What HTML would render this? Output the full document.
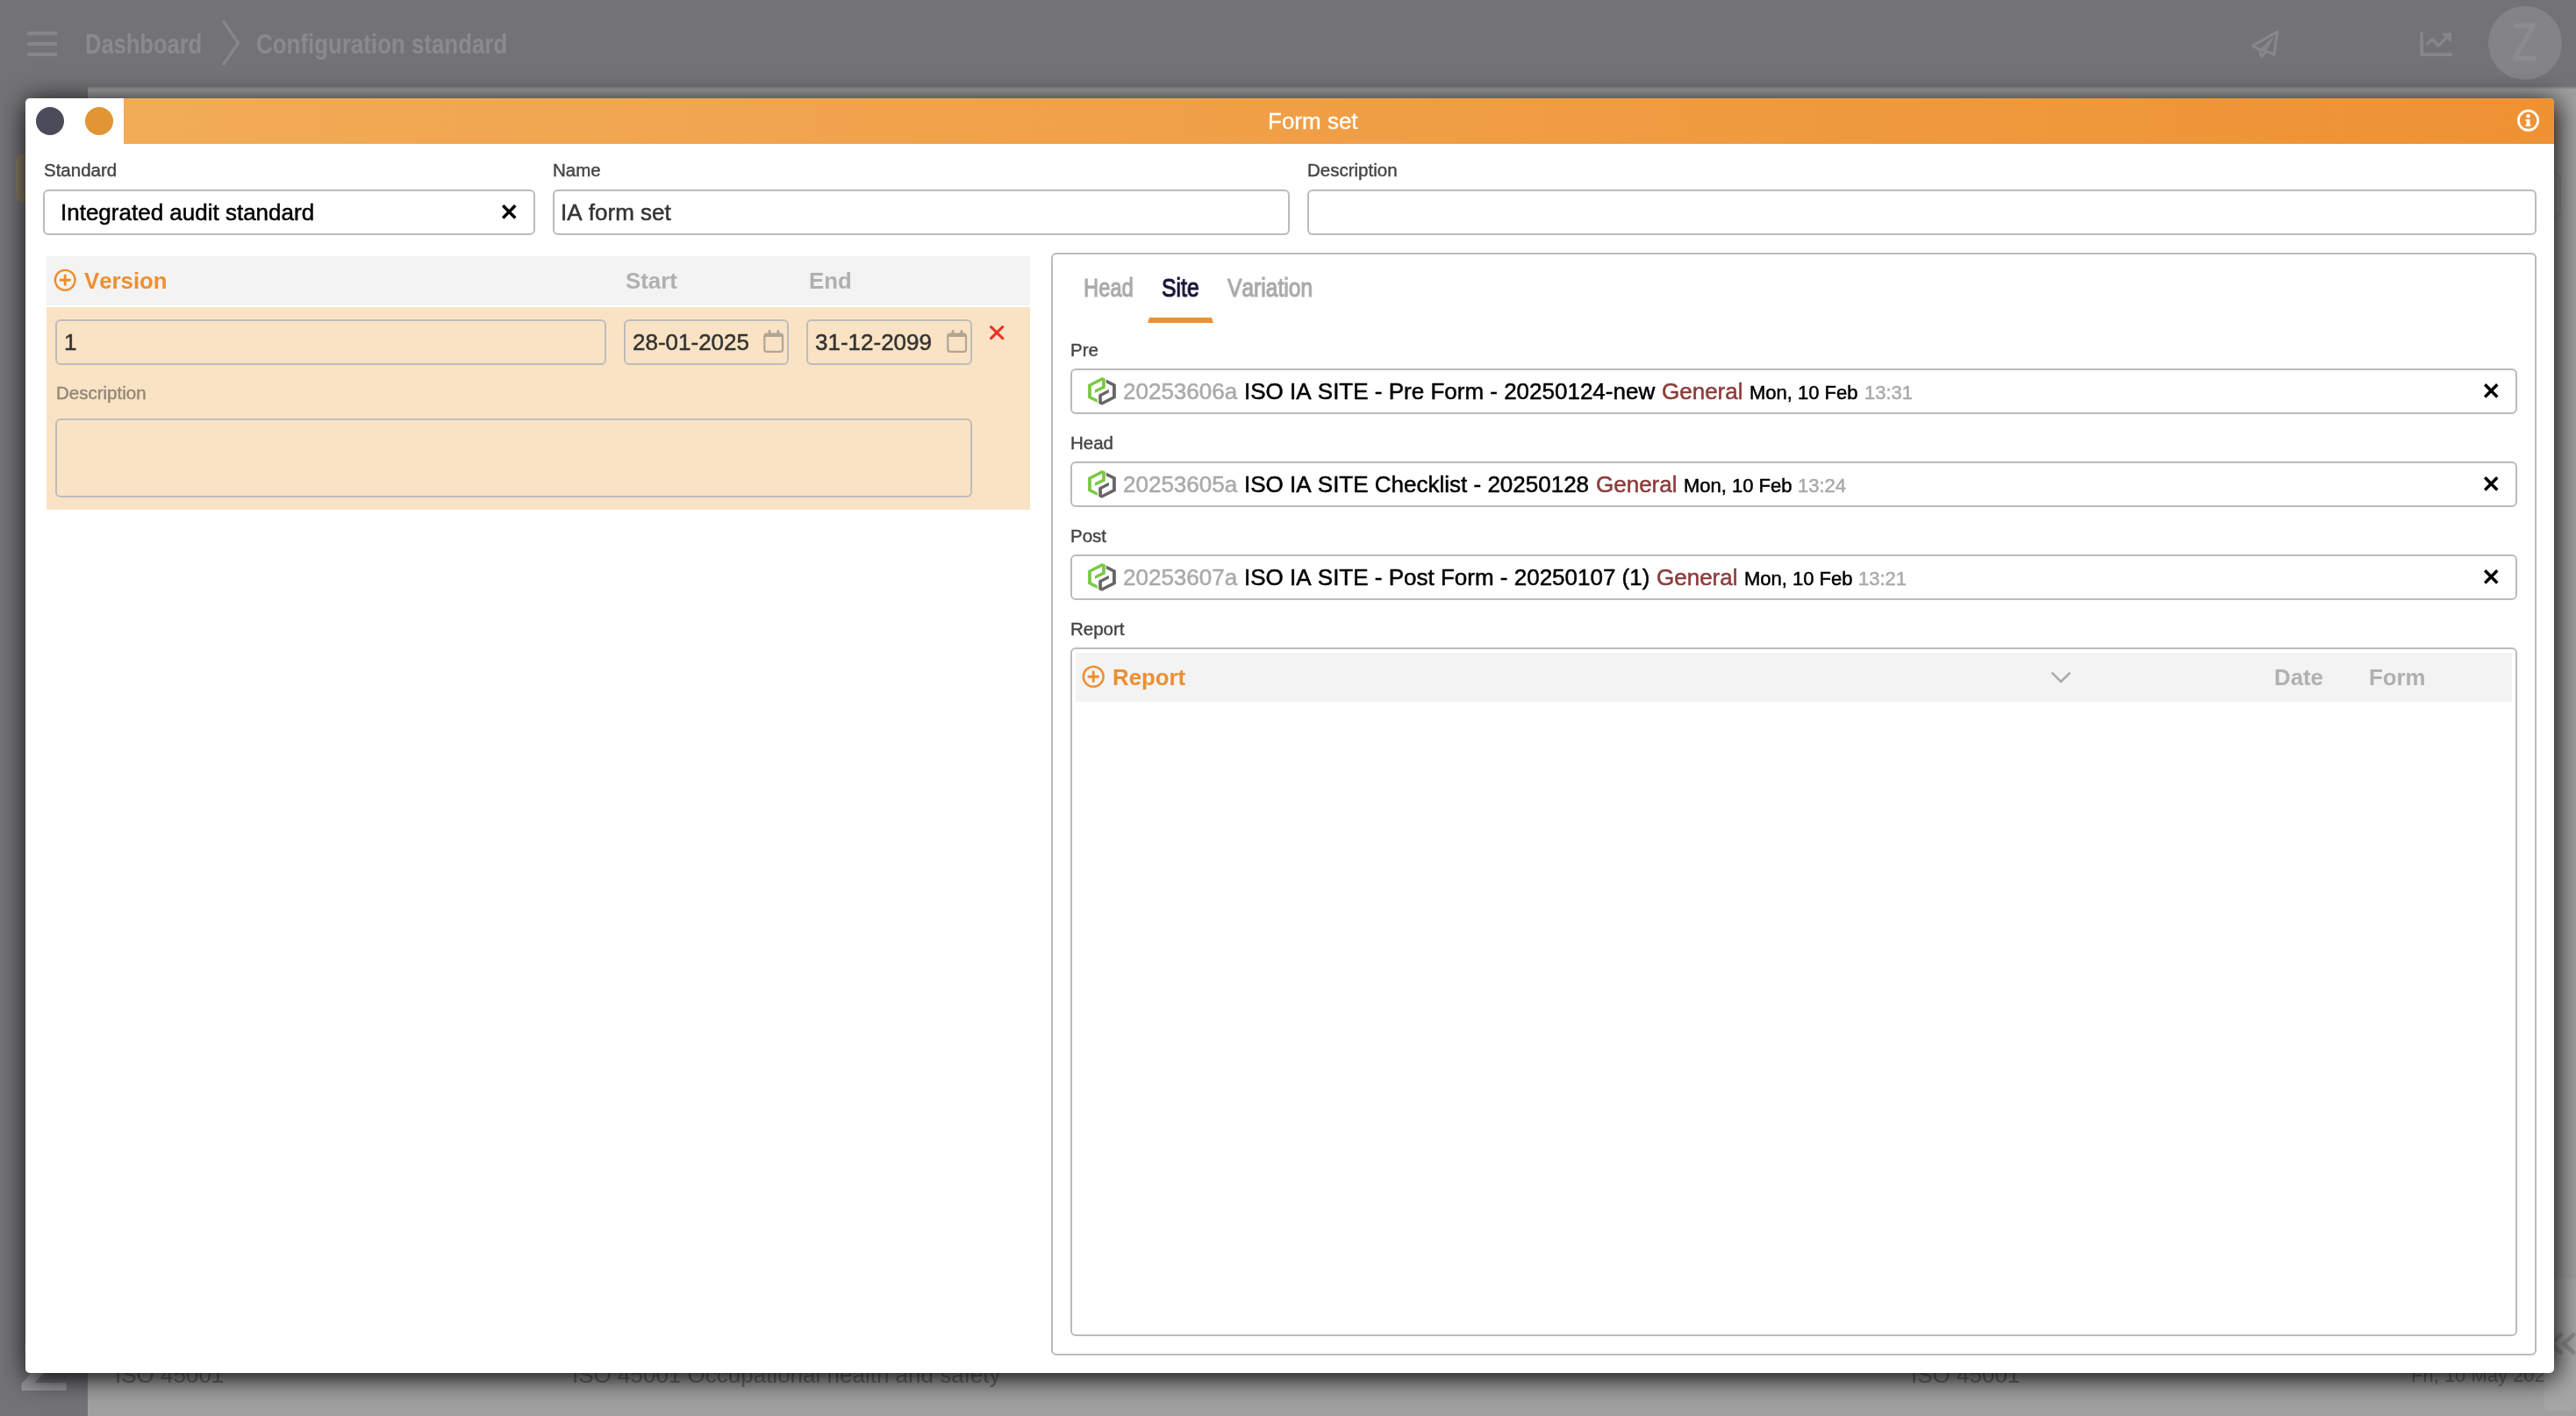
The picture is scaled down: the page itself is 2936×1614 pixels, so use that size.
<!DOCTYPE html>
<html>
<head>
<meta charset="utf-8">
<title>Form set</title>
<style>
*{box-sizing:border-box;margin:0;padding:0}
html,body{width:2936px;height:1614px;background:#a0a0a0}
#root{position:relative;width:2936px;height:1614px;overflow:hidden;background:#a0a0a0;font-family:"Liberation Sans",sans-serif;font-kerning:none}
.abs{position:absolute}
.t,.row{position:absolute;white-space:nowrap;line-height:1;will-change:transform}
.cond{transform-origin:0 50%}
svg{position:absolute;overflow:visible}
/* background app */
#topbar{left:0;top:0;width:2936px;height:99px;background:#737277}
#sidebar{left:0;top:99px;width:100px;height:1515px;background:#737277}
#content{left:100px;top:99px;width:2836px;height:1515px;background:#a0a0a0}
.bgtxt{color:#8b8a8f;font-weight:bold}
.bgrow{font-size:26px;color:#6a6a6a}
/* modal */
#modal{left:29px;top:112px;width:2882px;height:1453px;background:#fff;border-radius:5px;
  box-shadow:2px 4.4px 30px 0 rgba(0,0,0,1)}
#mhead{left:141px;top:112px;width:2770px;height:52px;background:linear-gradient(90deg,#f2ab57 0%,#ee9234 100%);border-top-right-radius:5px}
.dot{width:32px;height:32px;border-radius:50%}
.box{position:absolute;border:2px solid #bbb;border-radius:6px;background:transparent}
.row{font-size:26px;color:#000;-webkit-text-stroke:.5px}
.lbl{font-size:20.5px;color:#444;-webkit-text-stroke:.4px}
.inp{font-size:26px;color:#333;-webkit-text-stroke:.5px}
.th{font-size:25.8px;font-weight:bold;color:#b0b0b0}
.or{color:#ed8f32}
.g{color:#aaa}
.red{color:#8c3a3a}
.sm{font-size:22px}
</style>
</head>
<body>
<div id="root">
<!-- ===== background application (dimmed) ===== -->
<div id="topbar" class="abs"></div>
<div id="content" class="abs"></div>
<div id="sidebar" class="abs"></div>
<div class="abs" style="left:100px;top:99px;width:2836px;height:2.4px;background:rgba(0,0,0,.14)"></div>
<!-- hamburger -->
<div class="abs" style="left:31px;top:36px;width:33.5px;height:4px;background:#87868b"></div>
<div class="abs" style="left:31px;top:48px;width:33.5px;height:4px;background:#87868b"></div>
<div class="abs" style="left:31px;top:60px;width:33.5px;height:4px;background:#87868b"></div>
<div class="t cond bgtxt" id="bc1" style="left:97px;top:34.5px;font-size:31.5px;transform:scaleX(.81)">Dashboard</div>
<svg style="left:252px;top:22px" width="24" height="54" viewBox="0 0 24 54"><path d="M3 3 L19.5 27 L3 51" fill="none" stroke="#87868b" stroke-width="3.4" stroke-linecap="round" stroke-linejoin="round"/></svg>
<div class="t cond bgtxt" id="bc2" style="left:291.5px;top:34.5px;font-size:31.5px;transform:scaleX(.822)">Configuration standard</div>
<!-- paper plane -->
<svg id="plane" style="left:2565px;top:33px" width="35" height="34" viewBox="0 0 35 34"><path d="M2.7 19.1 L30.6 3.1 L27 29.2 L17.4 25.3 L13.8 30.4 Q12.4 32.2 11.7 29.8 L11.1 24 Z" fill="none" stroke="#87868b" stroke-width="3.2" stroke-linejoin="round" stroke-linecap="round"/><path d="M25.2 10.4 L11.3 24 L17.2 25.2 Z" fill="#87868b" stroke="#87868b" stroke-width="1.6" stroke-linejoin="round"/></svg>
<!-- chart -->
<svg id="chart" style="left:2758px;top:35px" width="38" height="30" viewBox="0 0 38 30"><path d="M2.1 2.6 V27.2 H35.6" fill="none" stroke="#87868b" stroke-width="3.8" stroke-linecap="round" stroke-linejoin="round"/><path d="M8.6 14.9 L14.4 9.5 L21.1 17.1 L30.5 7.6" fill="none" stroke="#87868b" stroke-width="3.3" stroke-linejoin="round" stroke-linecap="round"/><path d="M26 3.9 L35.3 3.3 L35.3 12.3 Z" fill="#87868b" stroke="#87868b" stroke-width="1.4" stroke-linejoin="round"/></svg>
<!-- avatar -->
<div class="abs" style="left:2836px;top:7px;width:84px;height:84px;border-radius:50%;background:#848387"></div>
<div class="t cond" id="avz" style="left:2863.2px;top:17.5px;font-size:61px;color:#8d8c90;-webkit-text-stroke:1.2px;transform:scaleX(.76)">Z</div>
<div class="abs" style="left:2600px;top:197px;width:319px;height:51px;border:2px solid rgba(0,0,0,.07);border-radius:7px"></div>
<!-- sidebar bits -->
<div class="abs" style="left:18px;top:175px;width:60px;height:56px;border-radius:8px;background:#867a65"></div>
<div class="t cond" id="sbz" style="left:22px;top:1519px;font-size:78px;font-weight:bold;color:#98989b;transform:scaleX(1.18)">Z</div>
<!-- content bits -->
<div class="t bgrow" style="left:131px;top:1554px">ISO 45001</div>
<div class="t bgrow" style="left:652px;top:1554px">ISO 45001 Occupational health and safety</div>
<div class="t bgrow" style="left:2178px;top:1554px">ISO 45001</div>
<div class="t bgrow" style="left:2748.4px;top:1556.8px;font-size:22px">Fri, 10 May 2024</div>
<div class="abs" style="left:2900px;top:1457px;width:36px;height:151px;border-radius:5px;background:#a6a6a6"></div>
<svg id="dbl" style="left:2900px;top:1515px" width="36" height="34" viewBox="0 0 36 34"><path d="M18.8 6.2 L7.7 16.6 L18.8 26.8 M33.2 6.2 L22.1 16.6 L33.2 26.8" fill="none" stroke="#8b8b8b" stroke-width="4.7" stroke-linecap="round" stroke-linejoin="round"/></svg>
<!-- ===== modal ===== -->
<div id="modal" class="abs"></div>
<div id="mhead" class="abs"></div>
<div class="abs dot" style="left:41px;top:122px;background:#4a4c59"></div>
<div class="abs dot" style="left:97px;top:122px;background:#e29534"></div>
<div class="t" id="title" style="left:1445px;top:125px;font-size:26px;color:#fff;-webkit-text-stroke:.3px">Form set</div>
<!-- info icon -->
<svg id="info" style="left:2868px;top:124px" width="27" height="27" viewBox="0 0 27 27"><circle cx="13.55" cy="13.3" r="11.1" fill="none" stroke="#fff" stroke-width="2.8"/><circle cx="13.5" cy="8.3" r="2.25" fill="#fff"/><path d="M10.6 11.9 H15.5 V17.7 H16.2 V19.9 H10.7 V17.7 H11.6 V14.1 H10.6 Z" fill="#fff"/></svg>

<!-- top fields -->
<div class="t lbl" id="l1" style="left:49.7px;top:184px">Standard</div>
<div class="t lbl" id="l2" style="left:630px;top:184px">Name</div>
<div class="t lbl" id="l3" style="left:1490px;top:184px">Description</div>
<div class="box" style="left:49px;top:216px;width:561px;height:52px"></div>
<div class="box" style="left:630px;top:216px;width:840px;height:52px"></div>
<div class="box" style="left:1490px;top:216px;width:1401px;height:52px"></div>
<div class="t inp" id="i1" style="left:69px;top:229px;color:#000">Integrated audit standard</div>
<svg class="x" style="left:571.85px;top:232.85px" width="16.5" height="16.7" viewBox="0 0 16.5 16.7"><path d="M1.20 1.20 L15.30 15.50 M15.30 1.20 L1.20 15.50" stroke="#000" stroke-width="3.4" stroke-linecap="butt" fill="none"/></svg>
<div class="t inp" id="i2" style="left:639.2px;top:229px">IA form set</div>

<!-- version table -->
<div class="abs" style="left:53px;top:292px;width:1121px;height:55.5px;background:#f3f3f3"></div>
<div class="abs" style="left:53px;top:350px;width:1121px;height:230.5px;background:#fae3c4"></div>
<svg class="plus" style="left:61px;top:306px" width="27" height="27" viewBox="0 0 27 27"><circle cx="13.2" cy="13.25" r="11.4" fill="none" stroke="#ee8d2f" stroke-width="2.4"/><path d="M7.9 13.25 H18.5 M13.2 7.95 V18.55" stroke="#ee8d2f" stroke-width="2.9" stroke-linecap="round" fill="none"/></svg>
<div class="t th or" id="h1" style="left:95.5px;top:307.8px">Version</div>
<div class="t th" id="h2" style="left:712.5px;top:307.8px">Start</div>
<div class="t th" id="h3" style="left:921.7px;top:307.8px">End</div>
<div class="box" style="left:63px;top:364px;width:628px;height:52px;border-color:#bdbcbe"></div>
<div class="box" style="left:711px;top:364px;width:188px;height:52px;border-color:#bdbcbe"></div>
<div class="box" style="left:919px;top:364px;width:189px;height:52px;border-color:#bdbcbe"></div>
<div class="t inp" id="v1" style="left:73px;top:376.7px">1</div>
<div class="t inp" id="v2" style="left:720.8px;top:376.7px">28-01-2025</div>
<div class="t inp" id="v3" style="left:929px;top:376.7px">31-12-2099</div>
<svg class="cal" style="left:870px;top:375px" width="24" height="28" viewBox="0 0 24 28"><rect x="1.3" y="5.6" width="20.7" height="20.3" rx="2.6" ry="2.6" fill="none" stroke="#b1a594" stroke-width="2.2"/><rect x="1.3" y="5.6" width="20.7" height="3.4" fill="#b1a594"/><path d="M7 2.4 V6 M16.9 2.4 V6" stroke="#b1a594" stroke-width="2.9" stroke-linecap="round"/></svg>
<svg class="cal" style="left:1079px;top:375px" width="24" height="28" viewBox="0 0 24 28"><rect x="1.3" y="5.6" width="20.7" height="20.3" rx="2.6" ry="2.6" fill="none" stroke="#b1a594" stroke-width="2.2"/><rect x="1.3" y="5.6" width="20.7" height="3.4" fill="#b1a594"/><path d="M7 2.4 V6 M16.9 2.4 V6" stroke="#b1a594" stroke-width="2.9" stroke-linecap="round"/></svg>
<svg class="x" style="left:1127.75px;top:371.15px" width="16.3" height="16.1" viewBox="0 0 16.3 16.1"><path d="M1.55 1.55 L14.75 14.55 M14.75 1.55 L1.55 14.55" stroke="#ea3323" stroke-width="3.1" stroke-linecap="round" fill="none"/></svg>
<div class="t lbl" id="l4" style="left:63.8px;top:437.7px;color:#908779">Description</div>
<div class="box" style="left:63px;top:477px;width:1045px;height:90px;border-color:#bdbcbe"></div>
<!-- right panel -->
<div class="box" style="left:1198px;top:288px;width:1693px;height:1257px"></div>
<div class="t cond tab g" id="tb1" style="left:1235px;top:313.4px;font-size:29.3px;-webkit-text-stroke:1.2px;transform:scaleX(.81)">Head</div>
<div class="t cond tab" id="tb2" style="left:1324px;top:313.4px;font-size:29.3px;color:#17173a;-webkit-text-stroke:1.2px;transform:scaleX(.845)">Site</div>
<div class="t cond tab g" id="tb3" style="left:1399.2px;top:313.4px;font-size:29.3px;-webkit-text-stroke:1.2px;transform:scaleX(.84)">Variation</div>
<div class="abs" style="left:1308px;top:362px;width:75px;height:6px;background:#ef8f33;clip-path:polygon(2px 0,73px 0,75px 6px,0 6px)"></div>
<div class="t lbl" id="rl0" style="left:1219.8px;top:388.9px">Pre</div>
<div class="box" style="left:1220px;top:420px;width:1649px;height:52px"></div>
<svg class="logo" style="left:1240px;top:430px" width="32" height="32" viewBox="0 0 32 32"><path d="M16.07 0 L19.86 1.85 V12.17 L7.93 17.93 V14.2 L16.07 10.3 V4.03 L3.86 9.97 V21.83 L10.81 25.22 V28.95 L0.07 23.69 V8.27 Z" fill="#7ac943"/><path d="M20.81 2.5 L31.83 8.1 V23.69 L15.9 31.83 L12.17 29.97 V19.8 L23.86 13.86 V17.59 L15.9 21.49 V27.93 L28 21.83 V9.97 L20.81 6.41 Z" fill="#666"/></svg>
<div class="row g" style="left:1279.5px;top:432.7px">20253606a</div>
<div class="row" style="left:1417.8px;top:432.7px">ISO IA SITE - Pre Form - 20250124-new</div>
<div class="row red" style="left:1893.6px;top:432.7px">General</div>
<div class="row sm" style="left:1994.0px;top:436.8px;">Mon, 10 Feb</div>
<div class="row sm g" style="left:2124.9px;top:436.8px">13:31</div>
<svg class="x" style="left:2830.85px;top:436.75px" width="16.5" height="16.7" viewBox="0 0 16.5 16.7"><path d="M1.20 1.20 L15.30 15.50 M15.30 1.20 L1.20 15.50" stroke="#000" stroke-width="3.4" stroke-linecap="butt" fill="none"/></svg>
<div class="t lbl" id="rl1" style="left:1219.8px;top:494.9px">Head</div>
<div class="box" style="left:1220px;top:526px;width:1649px;height:52px"></div>
<svg class="logo" style="left:1240px;top:536px" width="32" height="32" viewBox="0 0 32 32"><path d="M16.07 0 L19.86 1.85 V12.17 L7.93 17.93 V14.2 L16.07 10.3 V4.03 L3.86 9.97 V21.83 L10.81 25.22 V28.95 L0.07 23.69 V8.27 Z" fill="#7ac943"/><path d="M20.81 2.5 L31.83 8.1 V23.69 L15.9 31.83 L12.17 29.97 V19.8 L23.86 13.86 V17.59 L15.9 21.49 V27.93 L28 21.83 V9.97 L20.81 6.41 Z" fill="#666"/></svg>
<div class="row g" style="left:1279.5px;top:538.7px">20253605a</div>
<div class="row" style="left:1417.8px;top:538.7px">ISO IA SITE Checklist - 20250128</div>
<div class="row red" style="left:1819.1px;top:538.7px">General</div>
<div class="row sm" style="left:1919.0px;top:542.8px;">Mon, 10 Feb</div>
<div class="row sm g" style="left:2049.1px;top:542.8px">13:24</div>
<svg class="x" style="left:2830.85px;top:542.75px" width="16.5" height="16.7" viewBox="0 0 16.5 16.7"><path d="M1.20 1.20 L15.30 15.50 M15.30 1.20 L1.20 15.50" stroke="#000" stroke-width="3.4" stroke-linecap="butt" fill="none"/></svg>
<div class="t lbl" id="rl2" style="left:1219.8px;top:600.9px">Post</div>
<div class="box" style="left:1220px;top:632px;width:1649px;height:52px"></div>
<svg class="logo" style="left:1240px;top:642px" width="32" height="32" viewBox="0 0 32 32"><path d="M16.07 0 L19.86 1.85 V12.17 L7.93 17.93 V14.2 L16.07 10.3 V4.03 L3.86 9.97 V21.83 L10.81 25.22 V28.95 L0.07 23.69 V8.27 Z" fill="#7ac943"/><path d="M20.81 2.5 L31.83 8.1 V23.69 L15.9 31.83 L12.17 29.97 V19.8 L23.86 13.86 V17.59 L15.9 21.49 V27.93 L28 21.83 V9.97 L20.81 6.41 Z" fill="#666"/></svg>
<div class="row g" style="left:1279.5px;top:644.7px">20253607a</div>
<div class="row" style="left:1417.8px;top:644.7px">ISO IA SITE - Post Form - 20250107 (1)</div>
<div class="row red" style="left:1888.1px;top:644.7px">General</div>
<div class="row sm" style="left:1987.8px;top:648.8px;">Mon, 10 Feb</div>
<div class="row sm g" style="left:2118.4px;top:648.8px">13:21</div>
<svg class="x" style="left:2830.85px;top:648.75px" width="16.5" height="16.7" viewBox="0 0 16.5 16.7"><path d="M1.20 1.20 L15.30 15.50 M15.30 1.20 L1.20 15.50" stroke="#000" stroke-width="3.4" stroke-linecap="butt" fill="none"/></svg>
<div class="t lbl" id="rl3" style="left:1219.8px;top:706.9px">Report</div>
<div class="box" style="left:1220px;top:738px;width:1649px;height:785px"></div>
<div class="abs" style="left:1225.5px;top:744px;width:1637.5px;height:55.5px;background:#f3f3f3"></div>
<svg class="plus" style="left:1233.1px;top:758px" width="27" height="27" viewBox="0 0 27 27"><circle cx="13.2" cy="13.25" r="11.4" fill="none" stroke="#ee8d2f" stroke-width="2.4"/><path d="M7.9 13.25 H18.5 M13.2 7.95 V18.55" stroke="#ee8d2f" stroke-width="2.9" stroke-linecap="round" fill="none"/></svg>
<div class="t th or" id="h4" style="left:1268px;top:759.6px">Report</div>
<svg id="chev" style="left:2337px;top:765px" width="24" height="15" viewBox="0 0 24 15"><path d="M1.6 1.6 L12 12 L22.4 1.6" fill="none" stroke="#aaa" stroke-width="2.6"/></svg>
<div class="t th" id="h5" style="left:2592.3px;top:759.6px">Date</div>
<div class="t th" id="h6" style="left:2700.3px;top:759.6px">Form</div>
</div>
</body>
</html>
